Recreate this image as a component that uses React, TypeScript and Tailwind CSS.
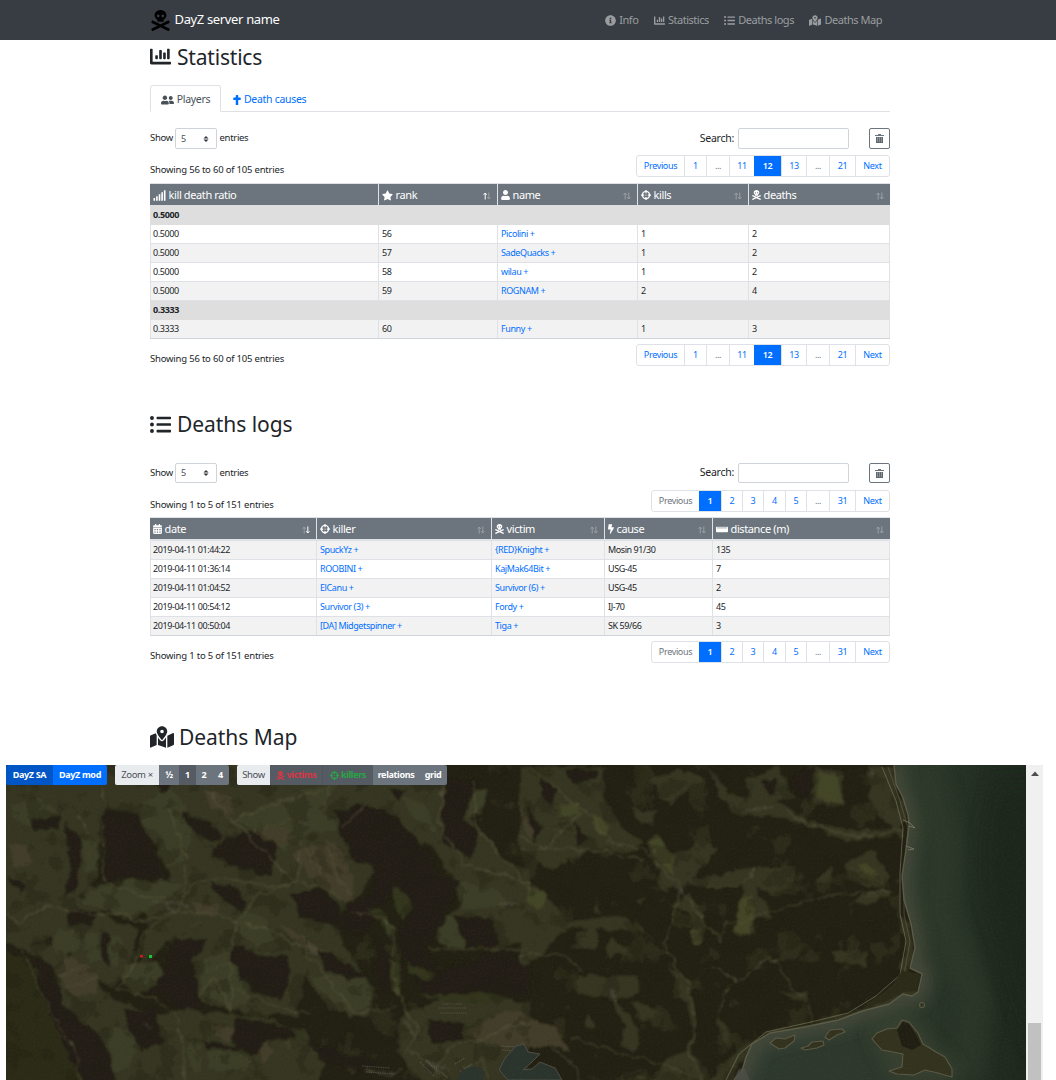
import React from "react";
import {
  FaBolt, FaCalendarAlt, FaChartBar, FaCross, FaCrosshairs, FaInfoCircle, FaListUl, FaMapMarkedAlt,
  FaSignal, FaSkullCrossbones, FaStar, FaUser, FaUserFriends, FaRulerHorizontal,
} from "react-icons/fa";

type Col = { label: string; icon: React.ReactNode; sort?: "up" | "down" | "none" };

function SortMark({ dir }: { dir: "up" | "down" | "none" }) {
  return (
    <svg className="mt-[1px] mr-[2px] h-[8px] w-[8px]" viewBox="0 0 8 8" fill="none" strokeWidth="1">
      <path d="M2.2 7.5V1M.6 2.8L2.2 1l1.6 1.8" stroke={dir === "up" ? "#fff" : "#9aa1a6"} />
      <path d="M5.8 .5V7M4.2 5.2L5.8 7l1.6-1.8" stroke={dir === "down" ? "#fff" : "#9aa1a6"} />
    </svg>
  );
}

function HeadRow({ cols, grid }: { cols: Col[]; grid: string }) {
  return (
    <div className={`grid h-[21px] bg-[#6c757d] ${grid}`}>
      {cols.map((c, i) => (
        <div key={c.label} className={`flex items-center justify-between pt-[1px] pr-[4px] pl-[3px] text-[11px] tracking-[-0.38px] text-white ${i ? "border-l border-[#dee2e6]" : ""}`}>
          <span className="flex items-center gap-[2.5px] whitespace-nowrap">{c.icon}{c.label}</span>
          {c.sort && <SortMark dir={c.sort} />}
        </div>
      ))}
    </div>
  );
}

function Row({ cells, grid, odd, links }: { cells: string[]; grid: string; odd: boolean; links: number[] }) {
  return (
    <div className={`grid h-[19px] border-r border-b border-[#dee2e6] last:border-b-[#ced4da] ${odd ? "bg-[#f2f2f2]" : "bg-white"} ${grid}`}>
      {cells.map((t, i) => (
        <div key={i} className={`border-l border-[#dee2e6] text-[9px] leading-[17px] whitespace-nowrap ${i ? "pl-[3px]" : "pl-[2px]"} ${links.includes(i) ? "tracking-[-0.4px] text-[#006fff]" : "tracking-[-0.42px] text-[#212529]"}`}>
          {t}
        </div>
      ))}
    </div>
  );
}

function Group({ text, tall }: { text: string; tall?: boolean }) {
  return <div className={`bg-[#dedede] pl-[3px] text-[9px] font-bold tracking-[-0.35px] ${tall ? "h-[20px] leading-[19px]" : "h-[19px] leading-[18px]"}`}>{text}</div>;
}

type Page = [string, string];
function Pager({ pages, active, disabled }: { pages: Page[]; active: string; disabled?: boolean }) {
  return (
    <div className="flex h-[22px] overflow-hidden rounded-[3px] border border-[#dee2e6] text-[9px] tracking-[-0.35px] text-[#006fff]">
      {pages.map(([t, w], i) => (
        <div
          key={i}
          className={`flex items-center justify-center ${w} ${t === active ? "-my-px bg-[#006fff] font-semibold text-white" : i ? "border-l border-[#dee2e6]" : ""} ${t === "..." || (disabled && i === 0) ? "text-[#6c757d]" : ""}`}
        >
          {t}
        </div>
      ))}
    </div>
  );
}

function Trash() {
  return (
    <svg className="h-[9px] w-[9px]" viewBox="0 0 9 9">
      <path d="M3 0h3v1h3v1H0V1h3z" fill="#6c757d" />
      <path d="M1 3h7v6H1z" fill="#8d949a" />
      <path d="M1 3h1v6H1zM3 3h1v5H3zM5 3h1v5H5zM7 3h1v6H7zM1 8h7v1H1z" fill="#5f686f" />
    </svg>
  );
}

function Controls({ box }: { box: string }) {
  return (
    <div className={`flex items-center justify-between ${box}`}>
      <div className="flex h-full items-center text-[9.5px] tracking-[-0.3px]">
        <span className="w-[25px]">Show</span>
        <span className="flex h-full w-[42px] items-center justify-between rounded-[2px] border border-[#ced4da] pr-[7px] pl-[5px] text-[9px] text-[#495057]">
          5
          <svg className="h-[6px] w-[6px]" viewBox="0 0 6 7" fill="#343a40"><path d="M3 0l3 3H0zM3 7l3-3H0z" /></svg>
        </span>
        <span className="ml-[2.5px]">entries</span>
      </div>
      <div className="flex h-full items-center text-[10.5px] tracking-[-0.25px]">
        <span className="mr-[4px]">Search:</span>
        <span className="h-full w-[111px] rounded-[2px] border border-[#ced4da]" />
        <span className="ml-[20px] flex h-full w-[21px] items-center justify-center rounded-[2px] border border-[#6c757d]">
          <Trash />
        </span>
      </div>
    </div>
  );
}

function InfoBar({ text, children }: { text: string; children: React.ReactNode }) {
  return (
    <div className="flex h-[22px] items-start justify-between">
      <span className="mt-[8px] text-[9.5px] leading-[14px] tracking-[-0.2px] whitespace-nowrap">{text}</span>
      {children}
    </div>
  );
}

const G1 = "grid-cols-[228px_119px_140px_111px_1fr]";
const G2 = "grid-cols-[166px_175px_113px_108px_1fr]";
const P1: Page[] = [["Previous", "w-[47px]"], ["1", "w-[22px]"], ["...", "w-[23px]"], ["11", "w-[25px]"], ["12", "w-[27px]"], ["13", "w-[25px]"], ["...", "w-[23px]"], ["21", "w-[26px]"], ["Next", "w-[34px]"]];
const P2: Page[] = [["Previous", "w-[47px]"], ["1", "w-[22px]"], ["2", "w-[21px]"], ["3", "w-[21px]"], ["4", "w-[22px]"], ["5", "w-[21px]"], ["...", "w-[23px]"], ["31", "w-[26px]"], ["Next", "w-[34px]"]];

const deaths = [
  ["2019-04-11 01:44:22", "SpuckYz +", "{RED}Knight +", "Mosin 91/30", "135"],
  ["2019-04-11 01:36:14", "ROOBINI +", "KajMak64Bit +", "USG-45", "7"],
  ["2019-04-11 01:04:52", "ElCanu +", "Survivor (6) +", "USG-45", "2"],
  ["2019-04-11 00:54:12", "Survivor (3) +", "Fordy +", "IJ-70", "45"],
  ["2019-04-11 00:50:04", "[DA] Midgetspinner +", "Tiga +", "SK 59/66", "3"],
];

const COAST = "M894 765L896 784L903 798L908 815L909 825L906 849L902 876L904 900L911 924L915 948L910 968L922 974L918 992L912 996L903 994L889 1004L862 1011L838 1020L804 1027L770 1033L752 1044L746 1057L742 1071L734 1080";

function Terrain() {
  return (
    <svg className="block h-[315px] w-[1020px]" viewBox="6 765 1020 315" preserveAspectRatio="none">
      <defs>
        <filter id="rough" x="-5%" y="-5%" width="110%" height="110%">
          <feTurbulence type="fractalNoise" baseFrequency="0.08" numOctaves="3" seed="4" />
          <feDisplacementMap in="SourceGraphic" scale="10" xChannelSelector="R" yChannelSelector="G" />
          <feGaussianBlur stdDeviation="0.8" />
        </filter>
        <filter id="bits" x="0" y="0" width="100%" height="100%" colorInterpolationFilters="sRGB">
          <feTurbulence type="fractalNoise" baseFrequency="0.035 0.03" numOctaves="4" seed="11" />
          <feColorMatrix values="0 0 0 0 0.24  0 0 0 0 0.245  0 0 0 0 0.15  10 0 0 0 -5.9" />
        </filter>
        <filter id="shade" x="0" y="0" width="100%" height="100%" colorInterpolationFilters="sRGB">
          <feTurbulence type="fractalNoise" baseFrequency="0.045" numOctaves="4" seed="23" />
          <feColorMatrix values="0 0 0 0 0.13  0 0 0 0 0.12  0 0 0 0 0.07  0 9 0 0 -4.9" />
        </filter>
        <filter id="grain" x="0" y="0" width="100%" height="100%" colorInterpolationFilters="sRGB">
          <feTurbulence type="fractalNoise" baseFrequency="0.5" numOctaves="2" seed="2" />
          <feColorMatrix values="0 0 0 0 0.42  0 0 0 0 0.45  0 0 0 0 0.3  1.2 0 0 0 -0.5" />
        </filter>
        <filter id="soft" filterUnits="userSpaceOnUse" x="650" y="700" width="450" height="450"><feGaussianBlur stdDeviation="8" /></filter>
        <linearGradient id="sea" x1="735" y1="0" x2="1026" y2="0" gradientUnits="userSpaceOnUse">
          <stop offset="0" stopColor="#2e392f" /><stop offset=".6" stopColor="#2c382b" /><stop offset=".82" stopColor="#232f23" /><stop offset="1" stopColor="#1d271d" />
        </linearGradient>
        <clipPath id="water"><path d={`${COAST}L1030 1084V760Z`} /></clipPath>
      </defs>
      <rect x="6" y="765" width="1020" height="315" fill="#221f13" />
      <rect x="6" y="765" width="894" height="315" filter="url(#bits)" opacity=".4" />

      <g filter="url(#rough)">
        <g transform="translate(0 760) scale(.338)">
          <g fill="#343521">
            <path d="M0 0H300V150L290 350L230 400L350 480L410 500L380 620L330 680L230 600L150 520L60 560L0 540Z" />
            <path d="M300 0H1320L1300 180L1240 260L1180 200L1100 180L1060 260L1110 330L1040 420L1000 460L1010 540L1110 680L1090 760L980 740L900 640L880 760L690 740L590 720L570 600L520 520L420 600L440 460L240 400L260 370L500 370L510 330L410 180L300 140Z" />
            <path d="M20 520L100 580L170 640L180 720L240 790L330 860L430 940L560 960V860L500 760L420 740L330 700L260 640L170 560Z" />
            <path d="M320 780L440 760L530 740L690 750L800 770L900 800L960 900L940 960H330Z" />
            <path d="M1130 100L1310 70L1400 180L1500 300L1568 330V520L1470 560L1380 550L1290 530L1330 460L1370 400L1290 270L1200 170Z" />
            <path d="M1180 760L1290 710L1440 690L1568 720V960H1250L1180 860Z" />
            <path d="M0 560L60 580L130 690L220 850L240 960H0Z" fill="#2c2a19" />
          </g>
          <g fill="#3a3c27">
            <path d="M420 130L500 80L560 160L570 230L540 300L500 320L460 280L480 220L410 180Z" />
            <path d="M370 350L540 370L450 440L390 480L360 460L240 420L260 380L360 370Z" />
            <path d="M690 180L800 120L1010 60L940 150L1010 200L900 220L840 270L760 210Z" />
            <path d="M370 600L460 600L490 640L460 680L400 700L360 650Z" /><path d="M240 520L290 510L300 590L270 600ZM320 515L365 530L350 600L330 620Z" />
            <path d="M150 560L170 500L230 510L240 560L190 580Z" /><path d="M590 600L650 560L690 560L700 640L780 700L690 730L600 700Z" />
            <path d="M1290 520L1330 460L1380 510L1380 560L1300 550Z" /><path d="M320 790L400 800L410 850L380 910L330 920Z" />
            <path d="M1360 360L1480 390L1500 440L1360 440Z" /><path d="M720 440L790 480L820 560L790 575L700 510Z" />
            <path d="M610 860L700 860L750 880L730 920L620 915ZM550 840L590 850L600 920L570 930Z" />
            <path d="M30 140L110 110L180 160L120 200L60 190ZM240 240L290 250L290 350L250 330Z" />
            <path d="M830 800L900 800L890 840L850 860ZM920 640L1080 640L1100 720L1040 760L960 700Z" />
            <path d="M1160 80L1210 110L1280 160L1290 220L1230 180ZM1390 80L1440 90L1430 160L1380 170Z" />
          </g>
          <g fill="#433e2b">
            <path d="M210 580L290 640L280 690L220 700L160 620Z" /><path d="M870 270L990 240L1050 350L1040 420L980 390L910 350Z" />
            <path d="M620 790L700 790L690 830L630 820Z" /><path d="M760 850L800 830L810 870L780 900Z" />
            <path d="M1380 800L1500 740L1568 760V860L1400 830Z" /><path d="M570 420L650 430L640 470L580 460Z" />
            <path d="M820 490L880 510L970 570L950 585L880 540Z" /><path d="M30 250L80 250L90 310L40 320Z" />
            <path d="M600 90L680 110L690 160L620 140ZM740 210L850 190L880 230L820 260Z" />
          </g>
          <g fill="#211e12">
            <path d="M305 150L400 150L430 200L460 270L480 320L510 360L370 350L310 365Z" />
            <path d="M640 240L740 215L800 240L820 270L800 350L740 330L690 310L630 280Z" />
            <path d="M540 150L600 170L660 220L620 240L560 200Z" /><path d="M620 365L700 380L730 420L710 445L640 400Z" />
            <path d="M870 390L960 380L1010 440L1000 500L940 470L880 460Z" />
            <path d="M680 540L790 580L850 580L860 650L830 710L760 690L720 650L680 590Z" />
            <path d="M510 530L610 530L600 560L570 600L590 690L600 740L540 740L480 700L430 690L480 640Z" />
            <path d="M990 150L1090 130L1180 170L1250 260L1310 350L1360 360L1290 520L1260 560L1300 620L1490 560L1568 590V700L1390 700L1250 700L1180 560L1190 480L1170 400L1110 430L1090 520L1000 500L1030 420L1100 400L1110 310L1050 300L1010 220Z" />
            <path d="M1310 60H1420L1370 170L1420 220L1390 300L1310 240Z" />
            <path d="M110 570L160 620L190 730L310 830L350 960H250L170 800L120 700Z" />
            <path d="M700 760L860 790L880 820L800 830L740 880L680 830Z" />
            <path d="M1340 460L1460 470L1480 550L1380 560Z" /><path d="M1270 770L1380 780L1370 830L1280 840Z" />
            <path d="M940 560L1010 590L1090 640L1040 650L960 620Z" /><path d="M1110 530L1180 600L1170 690L1110 680Z" />
            <path d="M370 740L460 740L480 830L420 860L380 800ZM450 60L500 50L490 100ZM90 170L180 170L170 200L110 210ZM200 440L290 450L270 490L210 490Z" />
            <path d="M190 180L240 230L230 380L190 410L210 300ZM300 500L325 510L320 620L300 600ZM20 340L80 370L60 400ZM1150 80L1210 90L1180 120Z" />
            <path d="M600 830L720 850L740 865L610 850ZM900 830L1040 870L1120 890L1050 920L950 880Z" />
          </g>
          <g fill="#33341f">
            <path d="M1170 370L1200 400L1220 440L1190 470L1165 430ZM1090 440L1150 460L1170 520L1140 510ZM1150 590L1180 600L1185 690L1165 680ZM1200 600L1290 630L1260 650L1210 630ZM1230 700L1340 690L1500 695L1440 720Z" />
          </g>
        </g>
        <g transform="translate(520 760) scale(.342)">
          <g fill="#353621">
            <path d="M0 20H250L240 100L300 200L360 240L340 270L200 260L90 320L0 260Z" />
            <path d="M370 240L400 220L440 280L490 270L530 230L580 260L540 310L480 370L420 370Z" />
            <path d="M550 20L620 100L780 130L840 180L1000 210L1120 200V225L950 235L780 170L640 160L580 110Z" />
            <path d="M660 60L760 20L800 110L680 140Z" /><path d="M860 20L940 30L950 135L860 120Z" /><path d="M1010 20H1090L1130 170L1100 210L1030 140Z" />
            <path d="M680 320L740 310L800 320L790 370L740 395L690 370L740 470L680 460L690 510L630 510L650 370L500 370L460 350Z" />
            <path d="M950 300L1030 260L1080 340L1060 380L960 350Z" /><path d="M970 420L1020 380L1090 380L1040 420Z" />
            <path d="M0 360L50 370L140 470L300 460L370 500L140 490L40 590L0 600Z" />
            <path d="M440 420L500 390L545 480L530 540L500 540L500 450Z" /><path d="M910 560L1015 560L1010 600L920 590Z" />
            <path d="M170 630L340 630L350 680L280 700L350 800L340 850L290 840L310 780L260 690L170 680Z" />
            <path d="M320 700L420 740L410 780L360 760Z" /><path d="M150 550L170 510L230 480L220 550Z" /><path d="M250 570L270 515L330 570L320 590L300 570Z" />
            <path d="M430 590L500 650L520 770L500 850L550 930L530 960H380L420 880L490 850L510 780L480 700Z" />
            <path d="M750 680L840 680L830 710L790 690Z" /><path d="M580 740L620 800L610 850L590 820Z" /><path d="M330 360L410 380L400 330L430 390Z" />
            <path d="M870 340L920 310L910 350L860 360Z" /><path d="M770 560L830 540L800 580L730 590Z" /><path d="M580 900L650 840L720 800L860 770L1000 730L1110 670L1150 640L1170 690L850 785L700 820L640 880L620 960H550Z" />
            <path d="M1100 440L1140 480L1150 560L1135 620L1110 620L1125 520Z" />
            <path d="M380 60L470 30L540 50L480 90L440 140L410 110ZM200 740L220 780L190 780ZM340 410L370 405L350 425ZM220 400L235 450L215 450ZM330 140L400 150L390 190L340 180Z" />
          </g>
          <g fill="#434428">
            <path d="M375 240L410 230L450 290L450 340L410 300Z" /><path d="M500 500L530 490L530 540L500 540Z" /><path d="M20 370L80 390L60 440L20 420Z" />
            <path d="M870 30L930 50L945 125L870 115Z" /><path d="M640 410L680 400L680 460L670 510L630 500Z" /><path d="M980 300L1040 320L1060 370L1000 340Z" />
            <path d="M210 160L260 190L250 230L210 190ZM100 130L160 120L180 160L110 170Z" />
          </g>
          <g fill="#211e12">
            <path d="M60 40L110 90L90 130L60 100ZM130 30L230 30L220 60L160 70ZM20 110L60 200L40 240ZM160 180L200 230L170 250ZM700 60L760 50L740 100ZM800 40L850 30L850 120L800 90Z" />
          </g>
          <g fill="#433c2a"><path d="M0 740L100 780L150 850L90 840L0 830Z" /><path d="M250 240H290L280 250H250Z" /><path d="M0 130L45 210L30 230L0 170Z" /></g>
        </g>
      </g>
      <rect x="6" y="765" width="894" height="315" filter="url(#shade)" opacity=".32" />

      <g fill="none" stroke="#605d42" strokeWidth=".7" strokeLinejoin="round" opacity=".7" filter="url(#rough)">
        <g transform="translate(0 760) scale(.338)" strokeWidth="3">
          <path d="M305 80L303 350L330 370L450 405L540 400L590 360L660 350L820 375L880 365L960 380L1030 420" />
          <path d="M500 150L550 280L545 400L520 450L430 500L400 600L350 680L450 705L530 760L550 960" />
          <path d="M690 180L800 290L880 365L890 250M600 80L690 180L840 120L960 90M1090 130L1010 200" />
          <path d="M1310 60L1300 190L1370 310L1568 360M1400 60L1410 200L1568 380M980 0L960 150" />
          <path d="M520 450L640 455L700 480L680 560L690 740L630 650L590 700M700 480L760 400L880 365M700 480L800 500L900 560L1050 750L1180 730" />
          <path d="M20 450L60 480L140 430L280 460L360 450L400 480L520 450M60 560L150 750L220 850L240 960M1040 450L1110 460L1170 500L1160 600L1190 720L1240 800L1200 870M1270 560L1568 560M690 680L860 740L910 750" />
          <path d="M1280 940L1330 850L1420 830L1500 790L1568 780M1210 860L1290 910L1300 950M1370 910L1430 890L1450 960M1080 900L1150 940L1190 910" />
          <path d="M900 250L930 330M920 245L950 340M960 240L1010 370M980 320L1040 400M830 240L880 225M820 260L900 240M750 210L860 180M180 640L270 600M200 670L285 640M610 620L690 600M560 490L600 480" opacity=".6" />
        </g>
        <g transform="translate(520 760) scale(.342)" strokeWidth="3">
          <path d="M30 20L190 150L270 240L360 260L470 375L580 530L600 480L750 440L880 400L1080 380" />
          <path d="M190 150L70 260L0 220M0 260H200L360 290M780 145L840 190L980 225L1120 210M470 375L420 540L490 650L520 770L490 850L550 960" />
          <path d="M560 600L640 650L730 570L790 660L840 700L850 770M580 740L610 650M540 370H640L690 320M150 810L290 855L480 910M0 830L90 840L160 890L185 960M0 575H140L180 620" />
          <path d="M290 910H370M290 925H370M295 940H372M100 180L180 170M100 200L170 220M960 320L1060 340M1000 400L1060 390" opacity=".6" />
        </g>
      </g>
      <g fill="none" stroke="#7b7960" strokeWidth="1" strokeLinejoin="round" opacity=".65">
        <path d="M882 767L896 801L903 828L900 873V914L906 941L900 975L876 996L848 1013L811 1022L766 1032L739 1054L722 1088" />
        <path d="M888 767L900 801L908 828L904 873V914L910 941L904 975L879 998" strokeWidth=".6" />
      </g>
      <g fill="none" stroke="#77746b" strokeWidth="3" strokeDasharray="1 1.5 2 1" opacity=".4" filter="url(#rough)">
        <path d="M152 901l14 3 10-2 12 4M168 906l8 7M78 815l10 18M297 820l12 2M500 904l22 2M385 920l7 20M306 945l14 8M676 886l8 8M745 810l28-2M610 988l6 16M871 770v8M404 1020l12 18M425 1062l24 8M142 1024l10 4M365 1068l30 5" />
      </g>
      <g fill="none" stroke="#75726a" strokeWidth="1.2" strokeDasharray="1.5 .8" opacity=".45">
        <path d="M439 1008h28M440 1013h27M442 1004h20M420 1062l14 14M426 1060l14 14M434 1066l14 12M455 1064l10-6M460 1072l12-8M500 1046l18 1M502 1050l16 1M362 1066l28 2M366 1072l28 2" />
      </g>

      <path d={`${COAST}L1026 1080V765Z`} fill="url(#sea)" />
      <g clipPath="url(#water)">
        <path d={COAST} fill="none" stroke="#444a3a" strokeWidth="20" filter="url(#soft)" />
        <path d="M925 765L945 850L940 910L975 1000L965 1080" fill="none" stroke="#2f3b2b" strokeWidth="35" filter="url(#soft)" opacity=".6" />
        <path d="M990 780Q965 880 995 940Q1005 1000 1040 1070V780Z" fill="#1b251a" filter="url(#soft)" opacity=".7" />
        <path d="M870 1035L885 1025L905 1017L925 1040L955 1070L945 1082L890 1075" fill="#3a4231" stroke="#3a4231" strokeWidth="8" filter="url(#soft)" opacity=".8" />
      </g>
      <path d={COAST} fill="none" stroke="#66654f" strokeWidth="1.4" opacity=".75" />
      <path d="M902 971L921 974L917 991L903 992L885 1002L862 1007L890 988Z" fill="#2b2a19" />
      <path d="M903 820l7 3 5 5-6-2M906 846l8 3-6 1" stroke="#746f5c" fill="none" />
      <g fill="#32321f" stroke="#5b5a46" strokeWidth="1.1" strokeLinejoin="round">
        <path d="M872 1039L877 1033L887 1029L897 1028L902 1020L909 1022L918 1033L923 1044L936 1052L945 1057L952 1069L952 1077L938 1073L925 1070L914 1075L897 1074L889 1071L902 1067L903 1054L893 1052L882 1050Z" />
        <path d="M770 1043L776 1038L785 1039L795 1035L794 1041L785 1048L779 1049Z" />
        <path d="M801 1048L808 1046L812 1042L823 1041L824 1045L817 1048L805 1050Z" />
        <path d="M825 1037L830 1030L842 1029L845 1032L837 1035L829 1040Z" />
        <circle cx="922" cy="1005" r="2.5" />
      </g>
      <path d="M897 1030L903 1022L909 1024L917 1036L921 1045L912 1050L902 1046Z" fill="#201e12" />
      <path d="M524 1044L516 1046L505 1058L499 1070L508 1080H562L555 1068L540 1062L532 1069L523 1070L532 1062L540 1054L528 1052Z" fill="#2a342d" stroke="#4f4e45" />
      <path d="M457 1080L462 1070L475 1066L485 1072L483 1080Z" fill="#2a342d" />
      <path d="M734 1080L738 1070L744 1067L750 1080" fill="#505048" opacity=".7" />
      <rect x="6" y="765" width="1020" height="315" filter="url(#grain)" opacity=".16" />
      <rect x="140" y="955" width="3" height="2.5" fill="#c51c1c" />
      <rect x="149" y="955" width="3" height="3" fill="#19c837" />
    </svg>
  );
}

function Scrollbar() {
  return (
    <div className="flex w-[17px] flex-col items-center bg-[#f0f0f0]">
      <svg className="mt-[6px] h-[5px] w-[8px]" viewBox="0 0 8 5" fill="#4d4d4d"><path d="M4 .5L8 5H0z" /></svg>
      <div className="mt-[247px] w-[13px] grow bg-[#c1c1c1]" />
    </div>
  );
}

function MapToolbar() {
  const b = "flex items-center justify-center gap-[2px] whitespace-nowrap";
  return (
    <div className="absolute top-0 left-0 flex h-[20px] text-[9px] font-bold tracking-[-0.35px] text-white">
      <div className="flex overflow-hidden rounded-[2px]">
        <span className={`${b} w-[47px] bg-[#0056c4]`}>DayZ SA</span>
        <span className={`${b} w-[54px] bg-[#006fff]`}>DayZ mod</span>
      </div>
      <div className="ml-[8px] flex overflow-hidden rounded-[2px] bg-[#6c757d]">
        <span className={`${b} w-[44px] bg-[#e9ecef] text-[9.5px] font-normal text-[#495057]`}>Zoom ×</span>
        <span className={`${b} w-[20px]`}>½</span>
        <span className={`${b} w-[17px] bg-[#545b62]`}>1</span>
        <span className={`${b} w-[16px]`}>2</span>
        <span className={`${b} w-[17px]`}>4</span>
      </div>
      <div className="ml-[8px] flex overflow-hidden rounded-[2px] bg-[#6c757d]">
        <span className={`${b} w-[33px] bg-[#e9ecef] text-[9.5px] font-normal text-[#495057]`}>Show</span>
        <span className={`${b} w-[53px] border-r border-[#4e555b] bg-[#545b62] text-[#dc3545]`}><FaSkullCrossbones className="h-[9px] w-[9px]" />victims</span>
        <span className={`${b} w-[50px] bg-[#545b62] text-[#28a745]`}><FaCrosshairs className="h-[9px] w-[9px]" />killers</span>
        <span className={`${b} w-[46px]`}>relations</span>
        <span className={`${b} w-[28px]`}>grid</span>
      </div>
    </div>
  );
}

export default function App() {
  const h = "flex h-[26px] items-center text-[21px] leading-[26px] text-[#212529]";
  const ic = "h-[11px] w-[11px]";
  const nav = "flex items-center gap-[3px]";
  return (
    <div className="h-[1080px] w-[1056px] overflow-hidden bg-white font-['Noto_Sans',sans-serif] text-[#212529]">
      <header className="h-[40px] bg-[#383d43]">
        <div className="ml-[150px] flex h-[40px] w-[732px] items-center justify-between">
          <div className="flex items-center gap-[3.5px] text-[13px] tracking-[-0.35px] text-white">
            <FaSkullCrossbones className="h-[21px] w-[21px] text-black" />
            DayZ server name
          </div>
          <nav className="flex items-center gap-[15.5px] text-[11px] tracking-[-0.47px] text-[#9a9da0]">
            <span className={nav}><FaInfoCircle className={ic} />Info</span>
            <span className={nav}><FaChartBar className={ic} />Statistics</span>
            <span className={nav}><FaListUl className={ic} />Deaths logs</span>
            <span className={nav}><FaMapMarkedAlt className="h-[11px] w-[12px]" />Deaths Map</span>
          </nav>
        </div>
      </header>

      <main className="ml-[150px] w-[740px]">
        <h2 className={`${h} mt-[4px] gap-[6px] tracking-[-0.2px]`}><FaChartBar className="mb-[2px] h-[21px] w-[21px]" />Statistics</h2>
        <div className="mt-[15px] flex h-[27px] border-b border-[#dee2e6] text-[10.5px] tracking-[-0.3px]">
          <div className="flex h-[27px] w-[71px] items-center justify-center gap-[3px] rounded-t-[3px] border border-[#dee2e6] border-b-white bg-white pt-[2px] text-[#495057]">
            <FaUserFriends className="h-[12px] w-[13px]" />Players
          </div>
          <div className="ml-[11px] flex items-center gap-[2px] pt-[3px] text-[#006fff]"><FaCross className="h-[10px] w-[10px]" />Death causes</div>
        </div>

        <div className="mt-[16px]"><Controls box="h-[21px]" /></div>
        <div className="mt-[6px]">
          <InfoBar text="Showing 56 to 60 of 105 entries"><Pager pages={P1} active="12" /></InfoBar>
        </div>
        <div className="mt-[6px] border-t border-[#dee2e6]">
          <HeadRow grid={G1} cols={[
            { label: "kill death ratio", icon: <FaSignal className="h-[11px] w-[13px]" /> },
            { label: "rank", icon: <FaStar className={ic} />, sort: "up" },
            { label: "name", icon: <FaUser className="h-[10px] w-[9px]" />, sort: "none" },
            { label: "kills", icon: <FaCrosshairs className="h-[10px] w-[10px]" />, sort: "none" },
            { label: "deaths", icon: <FaSkullCrossbones className="h-[10px] w-[9px]" />, sort: "none" },
          ]} />
          <Group text="0.5000" tall />
          <Row grid={G1} links={[2]} odd={false} cells={["0.5000", "56", "Picolini +", "1", "2"]} />
          <Row grid={G1} links={[2]} odd cells={["0.5000", "57", "SadeQuacks +", "1", "2"]} />
          <Row grid={G1} links={[2]} odd={false} cells={["0.5000", "58", "wilau +", "1", "2"]} />
          <Row grid={G1} links={[2]} odd cells={["0.5000", "59", "ROGNAM +", "2", "4"]} />
          <Group text="0.3333" />
          <Row grid={G1} links={[2]} odd cells={["0.3333", "60", "Funny +", "1", "3"]} />
        </div>
        <div className="mt-[5px]">
          <InfoBar text="Showing 56 to 60 of 105 entries"><Pager pages={P1} active="12" /></InfoBar>
        </div>

        <h2 className={`${h} mt-[45px] gap-[6px] tracking-[-0.05px]`}><FaListUl className="h-[21px] w-[21px]" />Deaths logs</h2>
        <div className="mt-[26px]"><Controls box="h-[20px]" /></div>
        <div className="mt-[7px]">
          <InfoBar text="Showing 1 to 5 of 151 entries"><Pager pages={P2} active="1" disabled /></InfoBar>
        </div>
        <div className="mt-[5px] border-t border-[#dee2e6]">
          <HeadRow grid={G2} cols={[
            { label: "date", icon: <FaCalendarAlt className="h-[10px] w-[9px]" />, sort: "down" },
            { label: "killer", icon: <FaCrosshairs className="h-[10px] w-[10px]" />, sort: "none" },
            { label: "victim", icon: <FaSkullCrossbones className="h-[10px] w-[9px]" />, sort: "none" },
            { label: "cause", icon: <FaBolt className="h-[10px] w-[6px]" />, sort: "none" },
            { label: "distance (m)", icon: <FaRulerHorizontal className="h-[11px] w-[12px]" />, sort: "none" },
          ]} />
          <div className="h-[2px] bg-[#dee2e6]" />
          {deaths.map((d, i) => <Row key={d[0]} grid={G2} links={[1, 2]} odd={i % 2 === 0} cells={d} />)}
        </div>
        <div className="mt-[5px]">
          <InfoBar text="Showing 1 to 5 of 151 entries"><Pager pages={P2} active="1" disabled /></InfoBar>
        </div>
        <h2 className={`${h} mt-[61px] gap-[5px] tracking-[-0.05px]`}><FaMapMarkedAlt className="h-[24px] w-[24px]" />Deaths Map</h2>
      </main>

      <section className="relative mt-[15px] ml-[6px] flex h-[315px] w-[1037px]">
        <Terrain />
        <Scrollbar />
        <MapToolbar />
      </section>
    </div>
  );
}
